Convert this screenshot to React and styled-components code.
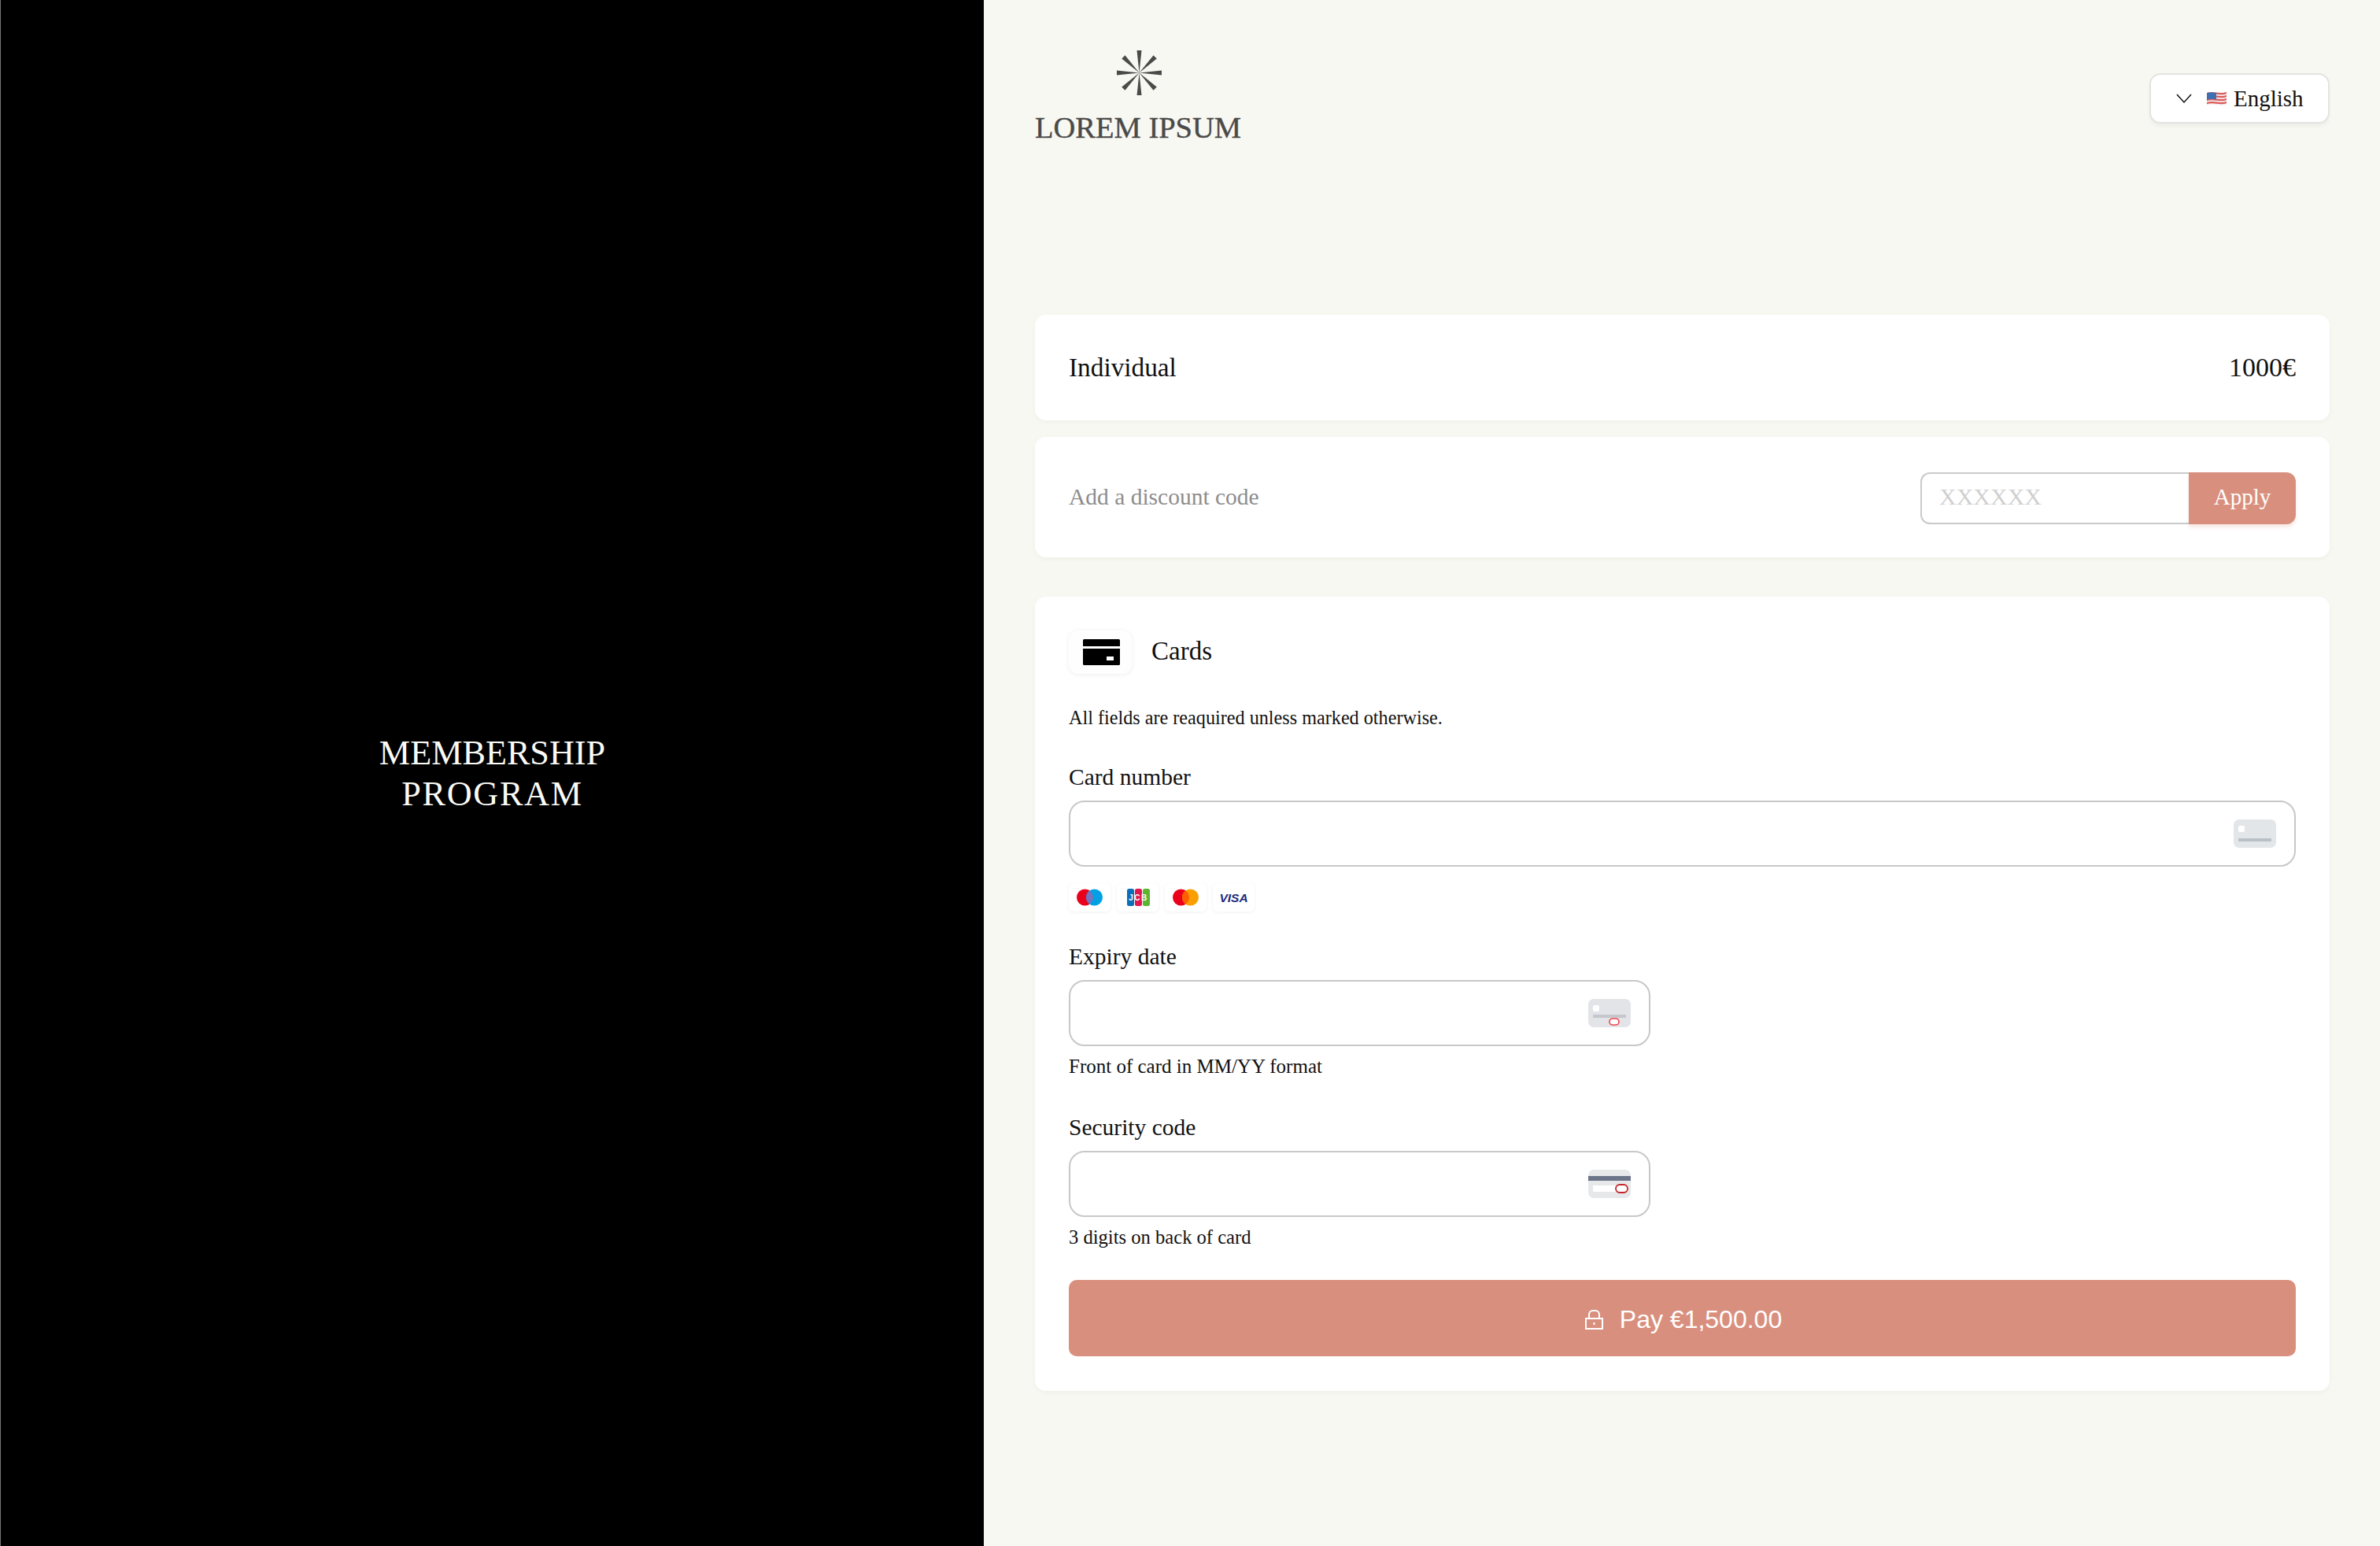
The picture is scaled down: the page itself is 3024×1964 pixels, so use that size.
import React from 'react';
import styled, { createGlobalStyle } from 'styled-components';

const GlobalStyle = createGlobalStyle`
  html, body {
    margin: 0;
    padding: 0;
    background: #f8f8f3;
  }
  * {
    box-sizing: border-box;
  }
`;

const serif = `'Liberation Serif', 'Times New Roman', serif`;
const sans = `'Liberation Sans', Arial, sans-serif`;
const accent = '#d98f7e';

const Page = styled.div`
  display: grid;
  grid-template-columns: 1250px 1fr;
  width: 3024px;
  height: 1964px;
  overflow: hidden;
  font-family: ${serif};
  color: #111;
`;

const Hero = styled.aside`
  display: flex;
  align-items: center;
  justify-content: center;
  padding-top: 2px;
  background: #000;
  border-left: 1px solid #7a7a7a;
`;

const HeroTitle = styled.h1`
  margin: 0;
  font-size: 44.2px;
  line-height: 52px;
  font-weight: 400;
  text-align: center;
  color: #fafaf6;
`;

const HeroLine = styled.span`
  display: block;
  letter-spacing: ${(p) => p.$spacing || 0}px;
`;

const Main = styled.main`
  display: flex;
  flex-direction: column;
  padding: 0 64px 0 65px;
`;

const Header = styled.header`
  display: flex;
  justify-content: space-between;
  align-items: flex-start;
  height: 400px;
`;

const Logo = styled.div`
  display: flex;
  flex-direction: column;
  align-items: center;
  padding-top: 64px;
  color: #4a4a48;
`;

const LogoText = styled.div`
  margin-top: 19px;
  font-size: 38.5px;
  line-height: 44px;
  font-weight: 400;
  white-space: nowrap;
  -webkit-text-stroke: 0.4px #4a4a48;
`;

const LangButton = styled.button`
  display: flex;
  align-items: center;
  width: 229px;
  height: 64px;
  margin-top: 93px;
  padding: 0 0 0 32px;
  background: #fff;
  border: 2px solid #e3e3e0;
  border-radius: 14px;
  box-shadow: 0 4px 4px rgba(0, 0, 0, 0.04);
  font-family: ${serif};
  font-size: 29px;
  color: #111;
`;

const LangLabel = styled.span`
  margin-left: 9px;
`;

const Card = styled.section`
  background: #fff;
  border-radius: 14px;
  box-shadow: 0 2px 6px rgba(0, 0, 0, 0.04);
  margin-top: ${(p) => p.$top || 0}px;
`;

const SummaryRow = styled(Card)`
  display: flex;
  align-items: center;
  justify-content: space-between;
  height: ${(p) => p.$height}px;
  padding: 0 43px;
`;

const PlanName = styled.span`
  font-size: 33.3px;
`;

const PlanPrice = styled.span`
  font-size: 34px;
`;

const DiscountLabel = styled.span`
  font-size: 29.5px;
  color: #8d8d8d;
`;

const DiscountForm = styled.form`
  display: flex;
  height: 66px;
  margin-top: 2px;
`;

const DiscountInput = styled.input`
  width: 341px;
  height: 100%;
  padding: 0 22px 3px;
  border: 2px solid #cacaca;
  border-right: 0;
  border-radius: 12px 0 0 12px;
  outline: none;
  font-family: ${serif};
  font-size: 30px;
  &::placeholder {
    color: #cfcfcf;
    opacity: 1;
  }
`;

const ApplyButton = styled.button`
  width: 136px;
  height: 100%;
  padding: 0 0 2px;
  background: ${accent};
  border: 0;
  border-radius: 0 12px 12px 0;
  box-shadow: 0 4px 4px rgba(217, 143, 126, 0.2);
  font-family: ${serif};
  font-size: 29px;
  color: #fff;
`;

const PaymentCard = styled(Card)`
  display: flex;
  flex-direction: column;
  padding: 43px 43px 44px;
`;

const MethodRow = styled.div`
  display: flex;
  align-items: center;
  gap: 25px;
`;

const MethodIconBox = styled.div`
  display: flex;
  align-items: center;
  justify-content: center;
  width: 80px;
  height: 55px;
  padding-left: 2px;
  background: #fefefe;
  border-radius: 12px;
  box-shadow: 0 1px 6px rgba(0, 0, 0, 0.07);
`;

const MethodName = styled.span`
  padding-bottom: 2px;
  font-size: 33px;
`;

const Notice = styled.p`
  margin: 40px 0 0;
  font-size: 24.2px;
  line-height: 32px;
`;

const Field = styled.div`
  display: flex;
  flex-direction: column;
  margin-top: ${(p) => p.$top}px;
`;

const FieldLabel = styled.label`
  font-size: 29.5px;
  line-height: 36px;
`;

const InputWrap = styled.div`
  position: relative;
  width: ${(p) => (p.$short ? '739px' : '100%')};
  height: 84px;
  margin-top: 12px;
`;

const TextInput = styled.input`
  width: 100%;
  height: 100%;
  padding: 0 90px 0 24px;
  background: #fff;
  border: 2px solid #c8c8c8;
  border-radius: 20px;
  outline: none;
`;

const InputIcon = styled.svg`
  position: absolute;
  top: 24px;
  right: 25px;
`;

const Hint = styled.div`
  margin-top: 10px;
  font-size: ${(p) => p.$size}px;
  line-height: 32px;
`;

const BrandRow = styled.div`
  display: flex;
  gap: 8px;
  margin-top: 21px;
`;

const Brand = styled.div`
  width: 53px;
  height: 36px;
  background: #fff;
  border-radius: 6px;
  box-shadow: 0 1px 4px rgba(0, 0, 0, 0.06);
`;

const PayButton = styled.button`
  display: flex;
  align-items: center;
  justify-content: center;
  gap: 21px;
  width: 100%;
  height: 97px;
  margin-top: 38px;
  padding: 4px 0 0 3px;
  background: ${accent};
  border: 0;
  border-radius: 10px;
  font-family: ${sans};
  font-size: 32px;
  color: #fff;
`;

const LogoMark = () => {
  const rays = [0, 45, 90, 135, 180, 225, 270, 315];
  return (
    <svg width="57" height="57" viewBox="-28.5 -28.5 57 57" fill="currentColor" style={{ marginLeft: 2 }}>
      {rays.map((deg) => (
        <polygon key={deg} points="0,0 -3,-28.5 3,-28.5" transform={`rotate(${deg})`} />
      ))}
    </svg>
  );
};

const Chevron = () => (
  <svg width="20" height="13" viewBox="0 0 20 13" fill="none" stroke="#111" strokeWidth="1.5">
    <path d="M1 1l9 10 9-10" />
  </svg>
);

const Flag = () => {
  const stripes = [1, 5, 9, 13];
  return (
    <svg width="25" height="19" viewBox="0 0 25 19" style={{ marginLeft: 19 }}>
      <path d="M0 2c8-3 16 2 25-1v16c-9 3-17-2-25 1z" fill="#f4efef" />
      {stripes.map((y) => (
        <path key={y} d={`M0 ${y + 1}c8-3 16 2 25-1v2.200c-9 3-17-2-25 1z`} fill="#dd5b5b" />
      ))}
      <path d="M0 2c4-1.300 8-.8 12 .1v8.400c-4-.8-8-1.300-12 .1z" fill="#3f6fb0" />
    </svg>
  );
};

const CardGlyph = () => (
  <svg width="47" height="33" viewBox="0 0 47 33">
    <path d="M1.500 0h44a1.500 1.500 0 0 1 1.500 1.500V9H0V1.500A1.500 1.500 0 0 1 1.500 0z" fill="#000" />
    <path d="M0 12h47v19.500a1.500 1.500 0 0 1-1.500 1.500h-44A1.500 1.500 0 0 1 0 31.500z" fill="#000" />
    <rect x="30" y="22" width="9" height="5" fill="#fff" />
  </svg>
);

const NumberIcon = () => (
  <InputIcon width="54" height="36" viewBox="0 0 54 36">
    <rect width="54" height="36" rx="7" fill="#e3e6e9" />
    <rect x="6" y="8" width="8" height="8" rx="2" fill="#fff" />
    <rect x="6" y="24" width="42" height="4" fill="#b9c1c7" />
  </InputIcon>
);

const ExpiryIcon = () => (
  <InputIcon width="54" height="36" viewBox="0 0 54 36">
    <rect width="54" height="36" rx="7" fill="#e3e4e8" />
    <rect x="6" y="8" width="8" height="8" rx="2" fill="#fff" />
    <rect x="6" y="20" width="42" height="4" fill="#c5c7cc" />
    <rect x="27" y="25" width="12" height="8" rx="4" fill="#fff" stroke="#f0444c" strokeWidth="1.600" />
  </InputIcon>
);

const SecurityIcon = () => (
  <InputIcon width="54" height="36" viewBox="0 0 54 36">
    <rect width="54" height="36" rx="7" fill="#e6e8ea" />
    <rect y="8" width="54" height="6" fill="#6b7488" />
    <rect x="6" y="20" width="42" height="8" rx="1" fill="#fff" />
    <rect x="35" y="19" width="15" height="10" rx="5" fill="#fff" stroke="#c4262b" strokeWidth="1.800" />
  </InputIcon>
);

const Rings = ({ left, right, overlap }) => (
  <svg width="53" height="36" viewBox="0 0 53 36">
    <circle cx="20.500" cy="18" r="10.500" fill={left} />
    <circle cx="32.500" cy="18" r="10.500" fill={right} />
    <path d="M26.500 9.400a10.500 10.500 0 0 1 0 17.200a10.500 10.500 0 0 1 0-17.200z" fill={overlap} />
  </svg>
);

const JcbMark = () => (
  <svg width="53" height="36" viewBox="0 0 53 36">
    <rect x="13" y="7" width="9" height="22" rx="2.500" fill="#0b6fb8" />
    <rect x="23" y="7" width="9" height="22" rx="2.500" fill="#e2174f" />
    <rect x="33" y="7" width="9" height="22" rx="2.500" fill="#5cb531" />
    <text x="27.500" y="22" textAnchor="middle" fontFamily={sans} fontSize="10" fontWeight="700" letterSpacing="1.500" fill="#fff">JCB</text>
  </svg>
);

const VisaMark = () => (
  <svg width="53" height="36" viewBox="0 0 53 36">
    <text x="26.500" y="23.500" textAnchor="middle" fontFamily={sans} fontSize="15.500" fontWeight="700" fontStyle="italic" fill="#1a2a7c">VISA</text>
  </svg>
);

const LockIcon = () => (
  <svg width="23" height="25" viewBox="0 0 23 25" fill="none" stroke="#fff" strokeWidth="2">
    <rect x="1" y="11" width="21" height="13" />
    <path d="M5 11V6a5 5 0 0 1 5-5h3a5 5 0 0 1 5 5v5" />
    <path d="M11.500 16v3" />
  </svg>
);

const App = () => (
  <Page>
    <GlobalStyle />
    <Hero>
      <HeroTitle>
        <HeroLine>MEMBERSHIP</HeroLine>
        <HeroLine $spacing={1.7}>PROGRAM</HeroLine>
      </HeroTitle>
    </Hero>
    <Main>
      <Header>
        <Logo>
          <LogoMark />
          <LogoText>LOREM IPSUM</LogoText>
        </Logo>
        <LangButton type="button">
          <Chevron />
          <Flag />
          <LangLabel>English</LangLabel>
        </LangButton>
      </Header>

      <SummaryRow $height={134}>
        <PlanName>Individual</PlanName>
        <PlanPrice>1000€</PlanPrice>
      </SummaryRow>

      <SummaryRow $height={153} $top={21}>
        <DiscountLabel>Add a discount code</DiscountLabel>
        <DiscountForm>
          <DiscountInput placeholder="XXXXXX" />
          <ApplyButton type="button">Apply</ApplyButton>
        </DiscountForm>
      </SummaryRow>

      <PaymentCard $top={50}>
        <MethodRow>
          <MethodIconBox>
            <CardGlyph />
          </MethodIconBox>
          <MethodName>Cards</MethodName>
        </MethodRow>
        <Notice>All fields are reaquired unless marked otherwise.</Notice>

        <Field $top={41}>
          <FieldLabel>Card number</FieldLabel>
          <InputWrap>
            <TextInput />
            <NumberIcon />
          </InputWrap>
        </Field>
        <BrandRow>
          <Brand><Rings left="#eb001b" right="#00a1e4" overlap="#7673c0" /></Brand>
          <Brand><JcbMark /></Brand>
          <Brand><Rings left="#eb001b" right="#f9a000" overlap="#ff5f00" /></Brand>
          <Brand><VisaMark /></Brand>
        </BrandRow>

        <Field $top={39}>
          <FieldLabel>Expiry date</FieldLabel>
          <InputWrap $short>
            <TextInput />
            <ExpiryIcon />
          </InputWrap>
          <Hint $size={25}>Front of card in MM/YY format</Hint>
        </Field>

        <Field $top={43}>
          <FieldLabel>Security code</FieldLabel>
          <InputWrap $short>
            <TextInput />
            <SecurityIcon />
          </InputWrap>
          <Hint $size={24.6}>3 digits on back of card</Hint>
        </Field>

        <PayButton type="button">
          <LockIcon />
          Pay €1,500.00
        </PayButton>
      </PaymentCard>
    </Main>
  </Page>
);

export default App;
